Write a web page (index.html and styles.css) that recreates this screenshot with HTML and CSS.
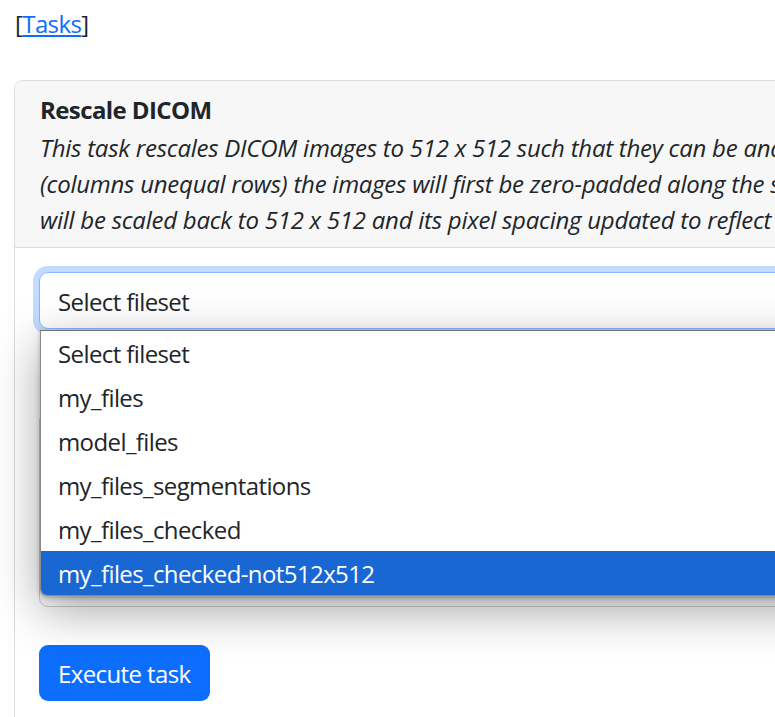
FILE: index.html
```html
<!DOCTYPE html>
<html lang="en">
<head>
<meta charset="utf-8">
<title>Rescale DICOM</title>
<link rel="stylesheet" href="styles.css">
</head>
<body>
<div class="page">
  <p class="crumbs">[<a href="#">Tasks</a>]</p>
  <div class="card">
    <div class="card-header">
      <div class="title">Rescale DICOM</div>
      <div class="desc">
        <span class="line">This task rescales DICOM images to 512 x 512 such that they can be analyzed by the model. If the images are non-square</span>
        <span class="line">(columns unequal rows) the images will first be zero-padded along the smallest dimension to make them square. The padded image</span>
        <span class="line">will be scaled back to 512 x 512 and its pixel spacing updated to reflect the new size.</span>
      </div>
    </div>
    <div class="card-body">
      <div class="field">
        <div class="select">Select fileset</div>
        <ul class="popup">
          <li>Select fileset</li>
          <li>my_files</li>
          <li>model_files</li>
          <li>my_files_segmentations</li>
          <li>my_files_checked</li>
          <li class="active">my_files_checked-not512x512</li>
        </ul>
      </div>
      <div class="options"></div>
      <button class="btn">Execute task</button>
    </div>
  </div>
</div>
</body>
</html>
```

FILE: styles.css
```css
html {
  overflow: hidden;
}
body {
  margin: 0;
  font-family: "Open Sans", "Noto Sans", sans-serif;
  font-size: 24px;
  line-height: 36px;
  letter-spacing: -0.6px;
  color: #212529;
  background: #fff;
}
.page {
  width: 1300px;
  padding: 6px 14px 0 14px;
}
.crumbs {
  margin: 0 0 38px 1px;
}
.crumbs a {
  color: #0d6efd;
  text-decoration: underline;
}
.card {
  border: 1px solid #dcdcdc;
  border-radius: 9px;
  height: 900px;
}
.card-header {
  background: #f7f7f7;
  padding: 11px 24px 9px 25px;
  border-bottom: 1px solid #dcdcdc;
  border-radius: 8px 8px 0 0;
}
.title {
  font-weight: 700;
  margin-bottom: 2px;
}
.desc {
  font-style: italic;
  letter-spacing: -0.25px;
}
.desc .line {
  display: block;
  white-space: nowrap;
}
.card-body {
  padding: 24px;
}
.field {
  position: relative;
}
.select {
  height: 55px;
  line-height: 57px;
  border: 1px solid #86b7fe;
  border-radius: 9px;
  padding: 0 18px;
  box-shadow: 0 0 0 6px rgba(13, 110, 253, 0.25);
  background: #fff;
}
.popup {
  position: absolute;
  top: 58px;
  left: 1px;
  width: 1100px;
  margin: 0;
  padding: 0;
  list-style: none;
  background: #fff;
  border: 1px solid #8a8a8a;
  border-top-color: #707070;
  border-radius: 0 0 7px 7px;
  box-shadow: 0 14px 48px rgba(0, 0, 0, 0.36), 0 2px 5px rgba(0, 0, 0, 0.25);
  overflow: hidden;
  z-index: 2;
}
.popup li {
  height: 44px;
  line-height: 45px;
  padding-left: 17px;
}
.popup li.active {
  background: #1967d2;
  color: #fff;
}
.options {
  margin-top: 83px;
  height: 193px;
  border: 1px solid #cfcfcf;
  border-radius: 9px;
}
.btn {
  margin-top: 38px;
  display: block;
  font: inherit;
  letter-spacing: -0.6px;
  height: 56px;
  line-height: 58px;
  padding: 0 19px;
  border: 0;
  border-radius: 9px;
  background: #0d6efd;
  color: #fff;
}
```
